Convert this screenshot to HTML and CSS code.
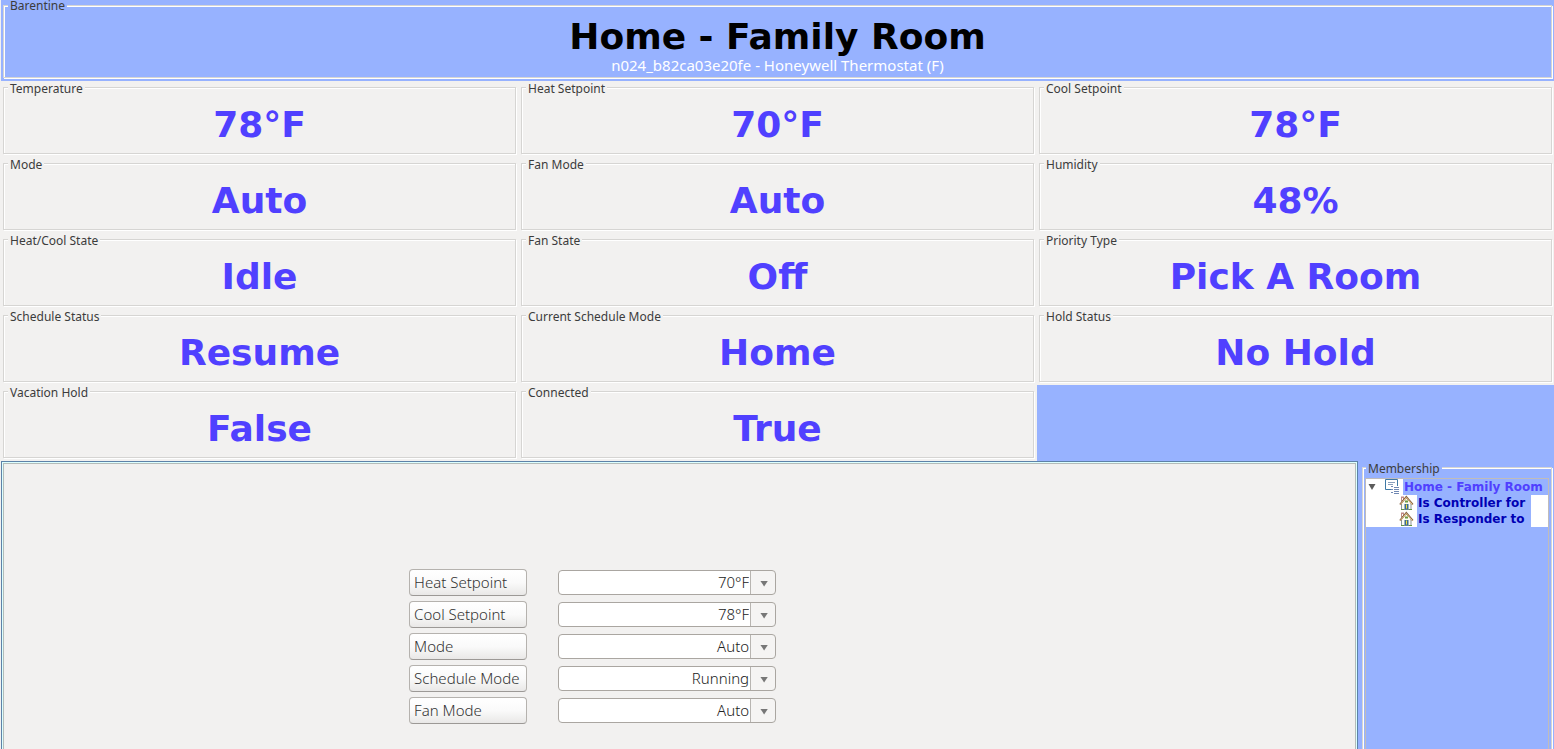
FILE: index.html
```html
<!DOCTYPE html>
<html lang="en">
<head>
<meta charset="utf-8">
<title>Home - Family Room</title>
<link rel="stylesheet" href="styles.css">
</head>
<body>
<main class="app">
  <header class="banner">
    <fieldset class="group banner-group">
      <legend>Barentine</legend>
      <h1>Home - Family Room</h1>
      <p>n024_b82ca03e20fe - Honeywell Thermostat (F)</p>
    </fieldset>
  </header>

  <section class="stats">
    <div class="stat"><fieldset class="group"><legend>Temperature</legend><output>78°F</output></fieldset></div>
    <div class="stat"><fieldset class="group"><legend>Heat Setpoint</legend><output>70°F</output></fieldset></div>
    <div class="stat"><fieldset class="group"><legend>Cool Setpoint</legend><output>78°F</output></fieldset></div>
    <div class="stat"><fieldset class="group"><legend>Mode</legend><output>Auto</output></fieldset></div>
    <div class="stat"><fieldset class="group"><legend>Fan Mode</legend><output>Auto</output></fieldset></div>
    <div class="stat"><fieldset class="group"><legend>Humidity</legend><output>48%</output></fieldset></div>
    <div class="stat"><fieldset class="group"><legend>Heat/Cool State</legend><output>Idle</output></fieldset></div>
    <div class="stat"><fieldset class="group"><legend>Fan State</legend><output>Off</output></fieldset></div>
    <div class="stat"><fieldset class="group"><legend>Priority Type</legend><output>Pick A Room</output></fieldset></div>
    <div class="stat"><fieldset class="group"><legend>Schedule Status</legend><output>Resume</output></fieldset></div>
    <div class="stat"><fieldset class="group"><legend>Current Schedule Mode</legend><output>Home</output></fieldset></div>
    <div class="stat"><fieldset class="group"><legend>Hold Status</legend><output>No Hold</output></fieldset></div>
    <div class="stat"><fieldset class="group"><legend>Vacation Hold</legend><output>False</output></fieldset></div>
    <div class="stat"><fieldset class="group"><legend>Connected</legend><output>True</output></fieldset></div>
  </section>

  <section class="lower">
    <form class="controls">
      <div class="control"><button type="button" id="heat">Heat Setpoint</button><span class="combo"><select aria-labelledby="heat"><option>70°F</option></select></span></div>
      <div class="control"><button type="button" id="cool">Cool Setpoint</button><span class="combo"><select aria-labelledby="cool"><option>78°F</option></select></span></div>
      <div class="control"><button type="button" id="mode">Mode</button><span class="combo"><select aria-labelledby="mode"><option>Auto</option></select></span></div>
      <div class="control"><button type="button" id="schedule">Schedule Mode</button><span class="combo"><select aria-labelledby="schedule"><option>Running</option></select></span></div>
      <div class="control"><button type="button" id="fan">Fan Mode</button><span class="combo"><select aria-labelledby="fan"><option>Auto</option></select></span></div>
    </form>

    <aside class="side">
      <fieldset class="group membership">
        <legend>Membership</legend>
        <ul class="tree">
          <li class="node root">
            <svg class="expander" width="8" height="6" viewBox="0 0 8 6"><path d="M0.500 0h7L4 6z" fill="#5c5c5c"/></svg>
            <svg width="16" height="16" viewBox="0 0 16 16">
              <path d="M7 10.500H1.500V0.500H13.500V7" fill="#fff" stroke="#3f79a6"/>
              <path d="M4 3.500h7M4 5.500h5" stroke="#8aa0bd"/>
              <path d="M7 7.500h2M7 10.500h2M7 13.500h2M10 8.500h5M10 10.500h5M10 12.500h5M10 14.500h5" stroke="#7189b4"/>
            </svg>
            <span class="name">Home - Family Room</span>
          </li>
          <li class="node child">
            <svg width="16" height="16" viewBox="0 0 16 16"><use href="#house"/></svg>
            <span class="name">Is Controller for</span>
          </li>
          <li class="node child">
            <svg width="16" height="16" viewBox="0 0 16 16">
              <g id="house">
                <rect x="3.500" y="2" width="2" height="4" fill="#fff" stroke="#c08a86"/>
                <path d="M3.500 8v6.500h9.500V8L8.300 3z" fill="#fdfcf4" stroke="#8c979c"/>
                <path d="M2 9.500L8.300 1.800L14.800 9.500" fill="none" stroke="#806045" stroke-width="1.800"/>
                <path d="M2.300 9.500L8.300 2.500L14.300 9.500" fill="none" stroke="#efc684"/>
                <rect x="6.500" y="9" width="4" height="5.500" fill="#3b6c91"/>
                <path d="M8.500 9.500v4" stroke="#f0dd35"/>
                <path d="M7 6.500h3" stroke="#6c9940" stroke-width="2"/>
                <path d="M3 14.500h3M11 14.500h3" stroke="#609643"/>
              </g>
            </svg>
            <span class="name">Is Responder to</span>
          </li>
        </ul>
      </fieldset>
    </aside>
  </section>
</main>
</body>
</html>
```
FILE: styles.css
```css
:root {
  --blue: #97b2ff;
  --gray: #f2f1f0;
  --violet: #5040ff;
}

* { box-sizing: border-box; }

body {
  margin: 0;
  background: var(--gray);
  color: #3c3c3c;
  font-family: "Noto Sans", "Open Sans", sans-serif;
}

.app {
  display: flex;
  flex-direction: column;
  height: 100vh;
  margin-left: 1px;
  overflow: hidden;
  background: var(--blue);
}

.group {
  min-width: 0;
  margin: 0;
  padding: 0;
  border: 1px solid #d6d5d3;
  box-shadow: 1px 1px 0 #fff, inset 1px 1px 0 #fff;
}

.group legend {
  margin-left: 4px;
  padding: 2px 2px 0;
  background: var(--gray);
  font-size: 12px;
  line-height: 11px;
  text-align: left;
}

.banner { padding: 0 2px 3px; }

.banner-group {
  padding-bottom: 4px;
  text-align: center;
}

.banner-group legend {
  padding: 0 2px;
  background: var(--blue);
}

.banner h1 {
  margin: 0;
  padding-top: 5px;
  color: #000;
  font: bold 36px/42px "DejaVu Sans", sans-serif;
}

.banner p {
  margin: 0;
  color: #fff;
  font-size: 15px;
  line-height: 15px;
}

.stats {
  display: grid;
  grid-template-columns: repeat(3, 1fr);
  width: calc(100% + 1px);
}

.stat {
  height: 76px;
  padding: 0 3px 3px 2px;
  background: var(--gray);
}

.stat .group { height: 100%; }

.stat output {
  display: block;
  padding-top: 10px;
  color: var(--violet);
  font: bold 36px/42px "DejaVu Sans", sans-serif;
  text-align: center;
}

.lower {
  display: grid;
  flex: 1;
  grid-template-columns: 1fr 192px;
  column-gap: 4px;
  min-height: 0;
}

.controls {
  display: flex;
  flex-direction: column;
  gap: 5px;
  padding: 107px 0 0 30%;
  border: 1px solid #5d82a8;
  border-bottom: 0;
  background: var(--gray);
  box-shadow: inset 1px 1px 0 #dff, inset -1px 0 0 #dff, inset 2px 2px 0 #b4bcb9, inset -2px 0 0 #b4bcb9;
}

.control {
  display: flex;
  align-items: center;
  gap: 31px;
}

.control button {
  width: 118px;
  height: 27px;
  padding: 0 4px 2px;
  border: 1px solid #b5b2ae;
  border-bottom-color: #9c9996;
  border-radius: 4px;
  background: linear-gradient(#fff, #fafafa 50%, #e9e8e7);
  color: #333;
  font: 300 15px/20px "Noto Sans", "Open Sans", sans-serif;
  text-align: left;
  white-space: nowrap;
}

.combo {
  display: grid;
  grid-template-columns: 1fr 24px;
  align-items: center;
  width: 218px;
  height: 25px;
  border: 1px solid #aaa6a1;
  border-radius: 4px;
  background: linear-gradient(to right, #fff calc(100% - 25px), #b8b5b1 calc(100% - 25px), #b8b5b1 calc(100% - 24px), #f5f4f3 calc(100% - 24px));
}

.combo::after {
  grid-area: 1 / 2;
  justify-self: center;
  width: 8px;
  height: 6px;
  margin: 2px 0 0 2px;
  background: #777;
  clip-path: polygon(0 0, 100% 0, 50% 100%);
  content: "";
  pointer-events: none;
}

.combo select {
  grid-area: 1 / 1 / 2 / 3;
  width: 100%;
  height: 23px;
  padding: 0 26px 2px 0;
  border: 0;
  background: transparent;
  color: #222;
  font: 300 15px/20px "Noto Sans", "Open Sans", sans-serif;
  text-align-last: right;
  appearance: none;
}

.side { padding-right: 2px; }

.membership {
  height: 100%;
  padding: 0 2px;
  border-bottom: 0;
}

.membership legend {
  margin-left: 1px;
  background: var(--blue);
}

.tree {
  height: 100%;
  margin: 4px 0 0;
  padding: 0;
  border: 1px solid #c0bcba;
  border-bottom: 0;
  list-style: none;
}

.node {
  display: flex;
  align-items: center;
  height: 16px;
  background: #fff;
  color: #0000b4;
  font: bold 12px/16px "DejaVu Sans", sans-serif;
  white-space: nowrap;
}

.root { padding-left: 2px; color: var(--violet); }

.root .expander { margin-right: 8px; }

.root .name { flex: 1; }

.child { padding-left: 32px; }

.name {
  margin-left: 3px;
  padding: 0 6px 0 1px;
  background: var(--blue);
}

.root .name { padding-right: 0; }
```
